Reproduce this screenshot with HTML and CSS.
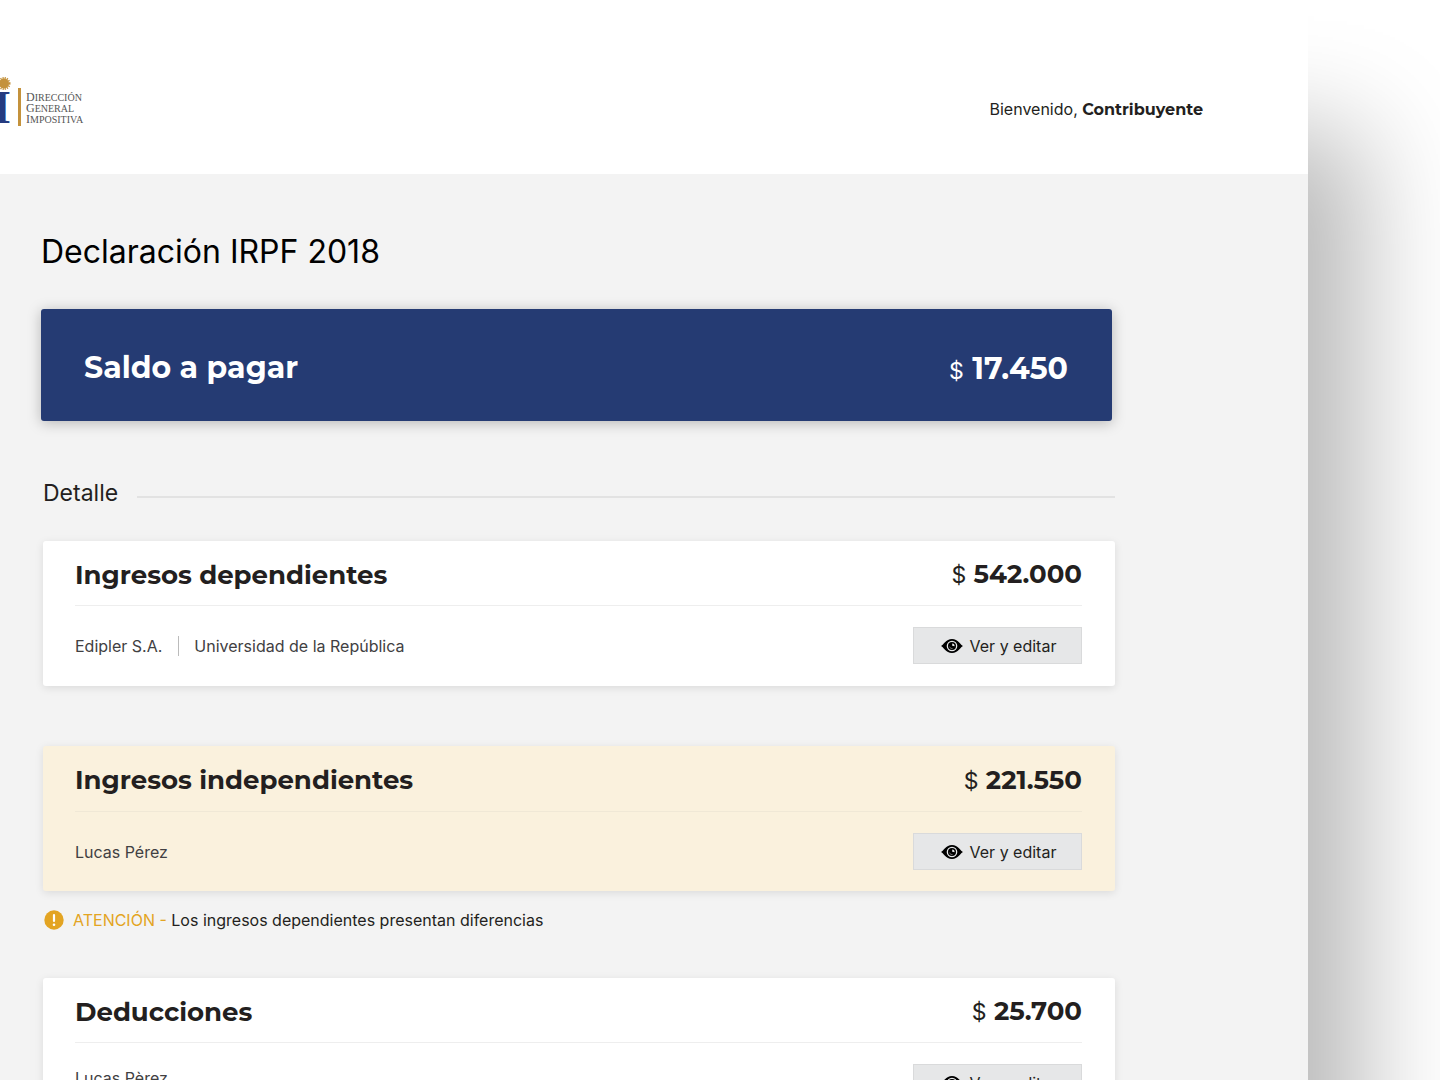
FILE: index.html
```html
<!DOCTYPE html>
<html lang="es">
<head>
<meta charset="utf-8">
<meta name="viewport" content="width=device-width, initial-scale=1">
<title>Declaración IRPF 2018</title>
<link rel="stylesheet" href="styles.css">
</head>
<body>
<svg class="sprite" aria-hidden="true">
  <symbol id="eye" viewBox="0 0 22 14">
    <path d="M0 7C2 6.500 5 0 11 0s9 6.500 11 7c-2 .5-5 7-11 7S2 7.500 0 7z" fill="#000"/>
    <circle cx="11" cy="7" r="5.300" fill="#e6e7e8"/>
    <circle cx="11" cy="7" r="4" fill="#000"/>
    <path d="M11.200 4.400a2.600 2.600 0 0 1 2.300 2.900l-2.300-.6z" fill="#e6e7e8"/>
    <path d="M8.600 7.600a2.600 2.600 0 0 0 3 2" fill="none" stroke="#aaa" stroke-width=".6"/>
  </symbol>
</svg>
<div class="app">
  <header class="header">
    <div class="brand">
      <div class="mark">
        <svg class="sun" viewBox="0 0 14 14" aria-hidden="true">
          <circle cx="7" cy="7" r="5" fill="#c4923c"/>
          <circle cx="7" cy="7" r="5.500" fill="none" stroke="#c4923c" stroke-width="2" stroke-dasharray="1.200 .96"/>
        </svg>
        <span class="letters">I</span>
      </div>
      <div class="brand-name"><span>Dirección</span><span>General</span><span>Impositiva</span></div>
    </div>
    <p class="welcome">Bienvenido, <strong>Contribuyente</strong></p>
  </header>
  <main class="content">
    <h1>Declaración IRPF 2018</h1>
    <section class="balance">
      <h2>Saldo a pagar</h2>
      <p class="amount"><span>$</span> 17.450</p>
    </section>
    <div class="details">
      <h2 class="divider">Detalle</h2>
      <section class="card">
        <div class="card-head"><h3>Ingresos dependientes</h3><p class="amount"><span>$</span> 542.000</p></div>
        <div class="card-body">
          <ul class="sources"><li>Edipler S.A.</li><li>Universidad de la República</li></ul>
          <button type="button"><svg aria-hidden="true"><use href="#eye"/></svg>Ver y editar</button>
        </div>
      </section>
      <section class="card card-warning">
        <div class="card-head"><h3>Ingresos independientes</h3><p class="amount"><span>$</span> 221.550</p></div>
        <div class="card-body">
          <ul class="sources"><li>Lucas Pérez</li></ul>
          <button type="button"><svg aria-hidden="true"><use href="#eye"/></svg>Ver y editar</button>
        </div>
      </section>
      <p class="notice">
        <svg viewBox="0 0 20 20" aria-hidden="true"><circle cx="10" cy="10" r="9.700" fill="#e3a422"/><path d="M10 5v6" stroke="#fff" stroke-width="2.200" stroke-linecap="round"/><circle cx="10" cy="14.800" r="1.300" fill="#fff"/></svg>
        <span><em>ATENCIÓN -</em> Los ingresos dependientes presentan diferencias</span>
      </p>
      <section class="card">
        <div class="card-head"><h3>Deducciones</h3><p class="amount"><span>$</span> 25.700</p></div>
        <div class="card-body card-body-top">
          <ul class="sources"><li>Lucas Pèrez</li></ul>
          <button type="button"><svg aria-hidden="true"><use href="#eye"/></svg>Ver y editar</button>
        </div>
      </section>
    </div>
  </main>
</div>
</body>
</html>
```
FILE: styles.css
```css
* { box-sizing: border-box; }
body {
  margin: 0;
  background: #fff;
  color: #231f20;
  font: 16px/20px Inter, "Liberation Sans", sans-serif;
  overflow-x: hidden;
}
h1, h2, h3, p, ul { margin: 0; padding: 0; }
.sprite { display: none; }
.app {
  margin-right: 132px;
  min-height: 100vh;
  background: #f3f3f3;
  box-shadow: 56px 130px 100px rgba(0, 0, 0, .27);
}
.header {
  display: flex;
  justify-content: space-between;
  align-items: flex-start;
  height: 174px;
  padding: 76px 105px 0 0;
  background: #fff;
}
.brand { display: flex; }
.mark {
  display: flex;
  flex-direction: column;
  align-items: flex-end;
  width: 11px;
  height: 50px;
}
.sun { flex: none; width: 14px; height: 15px; }
.letters {
  color: #253b80;
  font: bold 46px/34px "Liberation Serif", serif;
}
.brand-name {
  margin: 12px 0 0 7px;
  padding: 4px 0 0 5px;
  height: 38px;
  border-left: 3px solid #c4923c;
  color: #555;
  font: 10px/11px "Liberation Serif", serif;
  text-transform: uppercase;
}
.brand-name span { display: block; }
.brand-name span::first-letter { font-size: 12px; line-height: 11px; }
.welcome { padding-top: 23px; }
strong, h3, .balance h2, .amount { font-family: Montserrat, Inter, sans-serif; font-weight: 700; }
.content { padding: 58px 193px 60px 41px; }
h1 { font-size: 32px; line-height: 40px; font-weight: 400; color: #000; }
.balance {
  display: flex;
  justify-content: space-between;
  align-items: center;
  height: 112px;
  margin: 37px 3px 0 0;
  padding: 6px 44px 0 43px;
  border-radius: 3px;
  background: #253b73;
  color: #fff;
  box-shadow: 0 2px 14px rgba(0, 0, 0, .25);
}
.balance h2, .balance .amount { font-size: 30px; line-height: 40px; }
.balance .amount { padding-top: 3px; }
.details { padding-left: 2px; }
.divider {
  display: flex;
  align-items: center;
  gap: 19px;
  margin: 57px 0 32px;
  font-size: 23px;
  line-height: 31px;
  font-weight: 400;
}
.divider::after { content: ""; flex: 1; height: 2px; margin-top: 6px; background: #e2e2e2; }
.card {
  padding: 0 33px 22px 32px;
  border-radius: 3px;
  background: #fff;
  box-shadow: 0 2px 8px rgba(0, 0, 0, .1);
}
.card + .card { margin-top: 60px; }
.card-warning { background: #faf1dd; }
.card-head {
  display: flex;
  justify-content: space-between;
  align-items: center;
  height: 65px;
  padding-top: 3px;
  border-bottom: 1px solid #eee;
}
.card-warning .card-head { height: 66px; border-color: #f0e8d6; }
.card-warning { padding-bottom: 21px; }
.card h3, .card .amount { font-size: 26px; line-height: 34px; }
.amount span { font-family: Inter, sans-serif; font-weight: 400; font-size: 23px; }
.card-body { display: flex; justify-content: space-between; align-items: center; padding-top: 21px; }
.card-body-top { align-items: flex-start; }
.card-body-top .sources { padding-top: 4px; }
.sources { display: flex; list-style: none; color: #414042; }
.sources li + li { margin-left: 16px; padding-left: 15px; border-left: 1px solid #bbb; }
button {
  display: flex;
  justify-content: center;
  align-items: center;
  gap: 7px;
  width: 169px;
  height: 37px;
  padding: 0 0 0 2px;
  border: 1px solid #d9dadb;
  background: #e6e7e8;
  color: #231f20;
  font: inherit;
}
button svg { width: 22px; height: 14px; }
.notice { display: flex; align-items: center; gap: 9px; margin: 19px 0 48px 1px; }
.notice svg { width: 20px; height: 20px; }
.notice em { color: #e3a422; font-style: normal; }
```
